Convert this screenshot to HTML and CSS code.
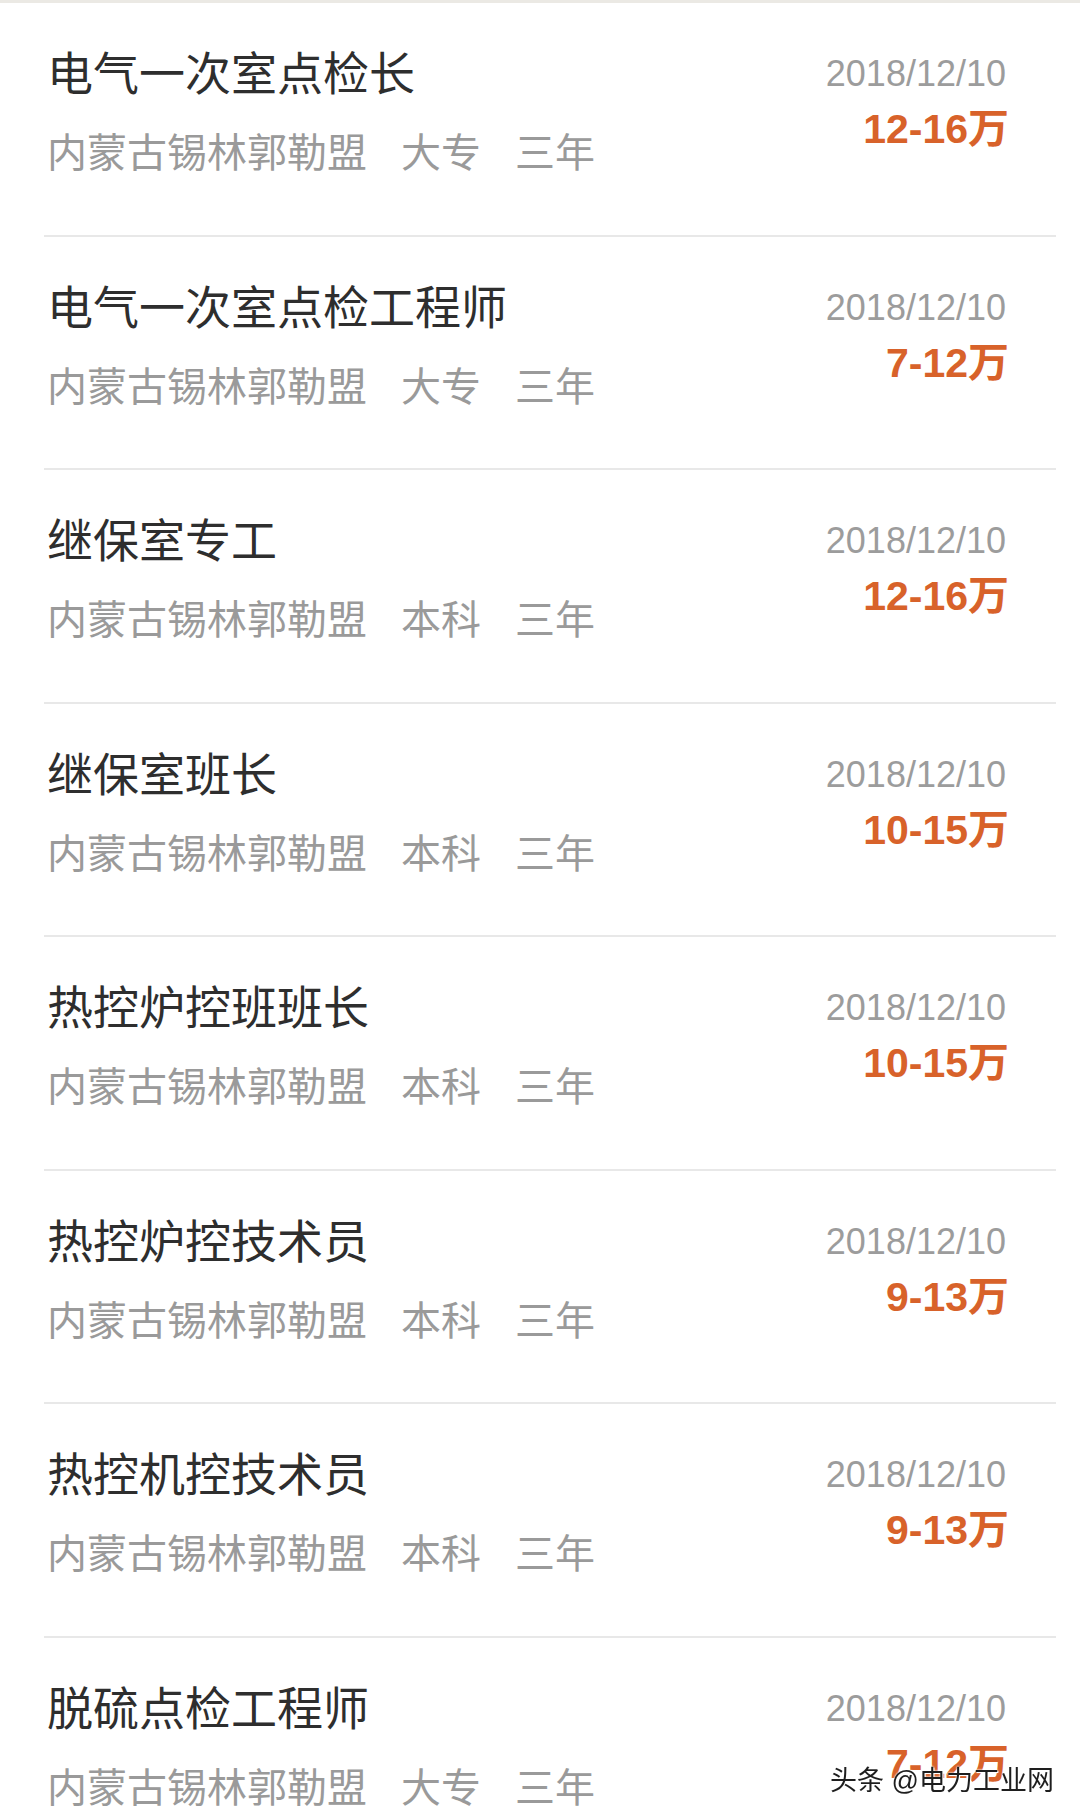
FILE: index.html
```html
<!DOCTYPE html>
<html lang="zh-CN">
<head>
  <meta charset="UTF-8">
  <meta name="viewport" content="width=device-width, initial-scale=1.0">
  <title>职位列表</title>
  <link rel="stylesheet" href="styles.css">
</head>
<body>
  <ul class="job-list">
    <li class="job">
      <div class="job-main">
        <div class="job-title">电气一次室点检长</div>
        <div class="job-meta"><span>内蒙古锡林郭勒盟</span><span>大专</span><span>三年</span></div>
      </div>
      <div class="job-side">
        <div class="job-date">2018/12/10</div>
        <div class="job-salary">12-16万</div>
      </div>
    </li>
    <li class="job">
      <div class="job-main">
        <div class="job-title">电气一次室点检工程师</div>
        <div class="job-meta"><span>内蒙古锡林郭勒盟</span><span>大专</span><span>三年</span></div>
      </div>
      <div class="job-side">
        <div class="job-date">2018/12/10</div>
        <div class="job-salary">7-12万</div>
      </div>
    </li>
    <li class="job">
      <div class="job-main">
        <div class="job-title">继保室专工</div>
        <div class="job-meta"><span>内蒙古锡林郭勒盟</span><span>本科</span><span>三年</span></div>
      </div>
      <div class="job-side">
        <div class="job-date">2018/12/10</div>
        <div class="job-salary">12-16万</div>
      </div>
    </li>
    <li class="job">
      <div class="job-main">
        <div class="job-title">继保室班长</div>
        <div class="job-meta"><span>内蒙古锡林郭勒盟</span><span>本科</span><span>三年</span></div>
      </div>
      <div class="job-side">
        <div class="job-date">2018/12/10</div>
        <div class="job-salary">10-15万</div>
      </div>
    </li>
    <li class="job">
      <div class="job-main">
        <div class="job-title">热控炉控班班长</div>
        <div class="job-meta"><span>内蒙古锡林郭勒盟</span><span>本科</span><span>三年</span></div>
      </div>
      <div class="job-side">
        <div class="job-date">2018/12/10</div>
        <div class="job-salary">10-15万</div>
      </div>
    </li>
    <li class="job">
      <div class="job-main">
        <div class="job-title">热控炉控技术员</div>
        <div class="job-meta"><span>内蒙古锡林郭勒盟</span><span>本科</span><span>三年</span></div>
      </div>
      <div class="job-side">
        <div class="job-date">2018/12/10</div>
        <div class="job-salary">9-13万</div>
      </div>
    </li>
    <li class="job">
      <div class="job-main">
        <div class="job-title">热控机控技术员</div>
        <div class="job-meta"><span>内蒙古锡林郭勒盟</span><span>本科</span><span>三年</span></div>
      </div>
      <div class="job-side">
        <div class="job-date">2018/12/10</div>
        <div class="job-salary">9-13万</div>
      </div>
    </li>
    <li class="job">
      <div class="job-main">
        <div class="job-title">脱硫点检工程师</div>
        <div class="job-meta"><span>内蒙古锡林郭勒盟</span><span>大专</span><span>三年</span></div>
      </div>
      <div class="job-side">
        <div class="job-date">2018/12/10</div>
        <div class="job-salary">7-12万</div>
      </div>
    </li>
  </ul>
  <div class="watermark">头条 @电力工业网</div>
</body>
</html>
```

FILE: styles.css
```css
body {
  margin: 0;
  padding: 0;
  background-color: #fff;
  border-top: 3px solid #ebe9e4;
  font-family: "Liberation Sans", "Noto Sans CJK SC", sans-serif;
}

.job-list {
  list-style: none;
  margin: 0 24px 0 44px;
  padding: 0;
}

.job {
  display: flex;
  justify-content: space-between;
  padding: 41px 50px 51.5px 3px;
  border-bottom: 2px solid #e8e8e8;
}

.job-title {
  font-size: 46px;
  line-height: 60px;
  color: #2e2e2e;
}

.job-meta {
  display: flex;
  gap: 34px;
  margin-top: 19px;
  font-size: 40px;
  line-height: 60px;
  color: #9a9a9a;
}

.job-side {
  text-align: right;
}

.job-date {
  font-size: 36px;
  line-height: 60px;
  color: #9c9c9c;
}

.job-salary {
  margin-right: -3px;
  font-size: 41px;
  line-height: 50px;
  font-weight: bold;
  color: #d8622a;
}

.watermark {
  position: fixed;
  right: 26px;
  bottom: 20px;
  font-size: 27px;
  line-height: 34px;
  color: #1e1e1e;
  text-shadow: 0 0 2px #fff, 0 0 2px #fff, 1px 1px 0 #fff;
}
```
